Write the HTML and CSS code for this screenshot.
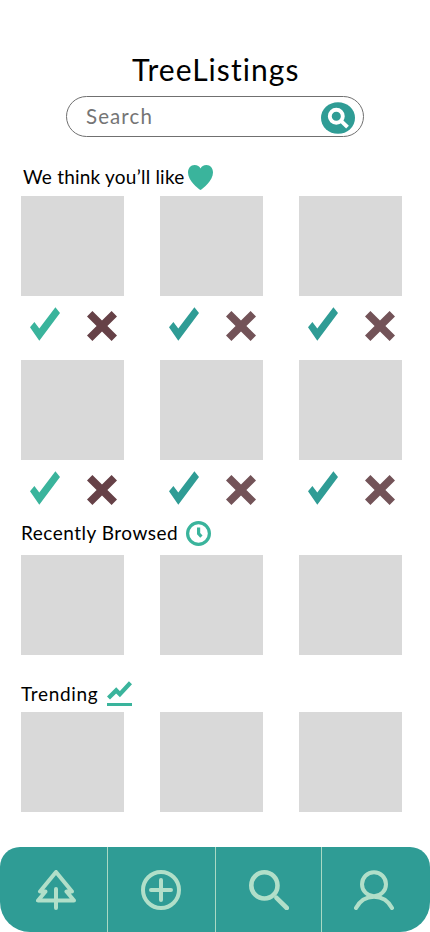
FILE: index.html
```html
<!DOCTYPE html>
<html lang="en">
<head>
<meta charset="utf-8">
<title>TreeListings</title>
<link rel="stylesheet" href="styles.css">
</head>
<body>
<svg width="0" height="0" class="defs">
  <symbol id="check" viewBox="0 0 30 34"><path d="M0 20.3 4.4 15 9.3 21.5 25.4.3 30 6 9.3 33.7Z"/></symbol>
  <symbol id="cross" viewBox="0 0 30 30"><path d="M5.4 0 15 9.6 24.6 0 30 5.4 20.4 15 30 24.6 24.6 30 15 20.4 5.4 30 0 24.6 9.6 15 0 5.4Z"/></symbol>
</svg>
<div class="app">
  <main>
    <h1><span>TreeListings</span></h1>
    <div class="search">
      <span class="placeholder">Search</span>
      <svg class="search-btn" viewBox="0 0 34 32"><ellipse cx="17" cy="16" rx="17" ry="15.8" fill="#2f9c95"/><g fill="none" stroke="#fff" stroke-width="3.9"><circle cx="15.3" cy="14.2" r="6.5"/><path d="m19.5 18.3 7 6.8"/></g></svg>
    </div>

    <h2 class="liked"><span>We think you’ll like</span>
      <svg class="heart" viewBox="0 0 25 25"><path fill="#3ab49c" d="M12.5 25C10 23.5 0 15.500 0 7.500C0 3 2.800 0 6.500 0C9.500 0 11.500 1.500 12.500 3.500C13.500 1.500 15.500 0 18.500 0C22.200 0 25 3 25 7.500C25 15.500 15 23.500 12.500 25Z"/></svg>
    </h2>
    <div class="grid">
      <div class="first"><div class="tile"></div><div class="actions"><svg class="check"><use href="#check"/></svg><svg class="cross"><use href="#cross"/></svg></div></div>
      <div><div class="tile"></div><div class="actions"><svg class="check"><use href="#check"/></svg><svg class="cross"><use href="#cross"/></svg></div></div>
      <div><div class="tile"></div><div class="actions"><svg class="check"><use href="#check"/></svg><svg class="cross"><use href="#cross"/></svg></div></div>
      <div class="first"><div class="tile"></div><div class="actions"><svg class="check"><use href="#check"/></svg><svg class="cross"><use href="#cross"/></svg></div></div>
      <div><div class="tile"></div><div class="actions"><svg class="check"><use href="#check"/></svg><svg class="cross"><use href="#cross"/></svg></div></div>
      <div><div class="tile"></div><div class="actions"><svg class="check"><use href="#check"/></svg><svg class="cross"><use href="#cross"/></svg></div></div>
    </div>

    <h2 class="recent"><span>Recently Browsed</span>
      <svg class="clock" viewBox="0 0 25 25" fill="none" stroke="#3ab49c" stroke-width="3.200"><circle cx="12.500" cy="12.500" r="10.900"/><path d="M12.600 6.500V12.700L15.400 15.600"/></svg>
    </h2>
    <div class="grid"><div class="tile"></div><div class="tile"></div><div class="tile"></div></div>

    <h2 class="trending"><span>Trending</span>
      <svg class="trend" viewBox="0 0 25 25" fill="none" stroke="#3ab49c"><path stroke-width="4.300" d="M1.500 17 9.200 9.400 12.900 13.200 23.500 1.800"/><path stroke-width="3" d="M0 23.500H25"/></svg>
    </h2>
    <div class="grid"><div class="tile"></div><div class="tile"></div><div class="tile"></div></div>
  </main>
  <nav>
    <a><svg viewBox="0 0 40 40"><path d="M20 2 4 21.500H9.500L2 30.500H38L30.500 21.500H36ZM20 19V38"/></svg></a>
    <a class="add"><svg viewBox="0 0 40 40"><circle cx="20" cy="20" r="18"/><path d="M20 10V30M10 20H30"/></svg></a>
    <a><svg viewBox="0 0 40 40" class="find"><circle cx="15.400" cy="15.400" r="13.100"/><path d="M27.500 27.800 37.800 38"/></svg></a>
    <a><svg viewBox="0 0 40 40"><circle cx="20" cy="14.200" r="12"/><path d="M2 38C10 23 30 23 38 38"/></svg></a>
  </nav>
</div>
</body>
</html>
```
FILE: styles.css
```css
* { box-sizing: border-box; }
body { margin: 0; background: #fff; color: #000; font-family: Lato, "Liberation Sans", sans-serif; }
svg { display: block; flex: none; }
.defs { position: absolute; }
.app { width: 430px; height: 932px; display: flex; flex-direction: column; justify-content: space-between; overflow: hidden; }
main { padding: 49px 28px 0 21px; }
h1 { margin: 0 0 7px 111px; height: 40px; font-size: 30px; line-height: 40px; font-weight: 400; white-space: nowrap; letter-spacing: 1.05px; }
.search { width: 298px; height: 41px; margin-left: 45px; padding: 0 8px 0 19px; border: 1px solid #707070; border-radius: 21px; display: flex; align-items: center; justify-content: space-between; }
.placeholder { color: #757575; font-size: 20.500px; line-height: 38px; margin-top: -2px; letter-spacing: 1.100px; }
.search-btn { width: 34px; height: 32px; margin-top: 2px; }
h2 { margin: 0; display: flex; font-size: 19px; font-weight: 400; white-space: nowrap; }
h2 span { line-height: 24px; }
.liked { height: 59px; padding: 28px 0 0 2px; }
.liked span { width: 165px; letter-spacing: .22px; }
.heart, .clock, .trend { width: 25px; height: 25px; }
.grid { display: grid; grid-template-columns: repeat(3, 103px); column-gap: 36px; }
.tile { height: 100px; background: #d9d9d9; }
.actions { height: 64px; padding: 11px 7px 0 9px; display: flex; justify-content: space-between; }
.check { width: 30px; height: 34px; fill: #2f9c95; }
.cross { width: 30px; height: 30px; margin-top: 4px; fill: #735358; }
.first .check { fill: #3ab49c; }
.first .cross { fill: #664147; }
.recent { height: 34px; margin-top: -3px; }
.recent span { width: 165px; letter-spacing: .5px; }
.trending { height: 57px; padding-top: 26px; }
.trending span { width: 86px; line-height: 25px; letter-spacing: .65px; }
nav { height: 85px; display: grid; grid-template-columns: 108px 108px 106px 108px; background: #2f9c95; border-radius: 20px 20px 30px 30px; }
nav a { display: flex; justify-content: center; padding-top: 23px; border-right: 1px solid #a9d9c4; }
nav a:last-child { border: 0; padding-right: 4px; }
nav a:first-child { padding-left: 5px; }
nav .add { padding-right: 1px; }
nav svg { width: 40px; height: 40px; fill: none; stroke: #b1dfc9; stroke-width: 4; stroke-linecap: round; stroke-linejoin: round; }
nav .find { stroke-width: 4.600; }
```
